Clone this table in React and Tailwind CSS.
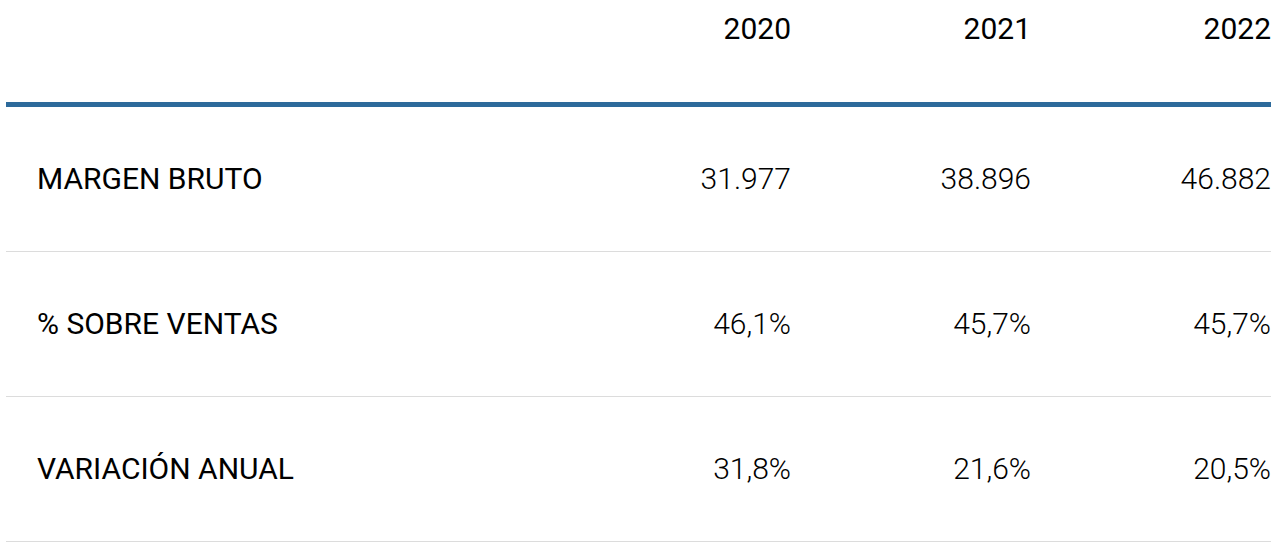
const years = ['2020', '2021', '2022']

const rows = [
  { label: 'MARGEN BRUTO', values: ['31.977', '38.896', '46.882'] },
  { label: '% SOBRE VENTAS', values: ['46,1%', '45,7%', '45,7%'] },
  { label: 'VARIACIÓN ANUAL', values: ['31,8%', '21,6%', '20,5%'] },
]

export default function App() {
  return (
    <div className="min-h-screen bg-white text-black" style={{ fontFamily: 'Roboto, "Liberation Sans", sans-serif' }}>
      <div className="ml-[6px] w-[1265px]">
        {/* Header */}
        <div className="grid grid-cols-[545px_240px_240px_240px] h-[107px] pt-[8px] border-b-[5px] border-[#2d6a9b]">
          <div />
          {years.map((y) => (
            <div key={y} className="text-right text-[30px] leading-[42px] font-normal">
              {y}
            </div>
          ))}
        </div>

        {/* Rows */}
        {rows.map((row) => (
          <div
            key={row.label}
            className="grid grid-cols-[545px_240px_240px_240px] items-center h-[145px] border-b border-[#dcdcdc]"
          >
            <div className="pl-[31px] text-[30px] leading-[42px] font-normal">{row.label}</div>
            {row.values.map((v, i) => (
              <div key={i} className="text-right text-[30px] leading-[42px] font-light">
                {v}
              </div>
            ))}
          </div>
        ))}
      </div>
    </div>
  )
}
